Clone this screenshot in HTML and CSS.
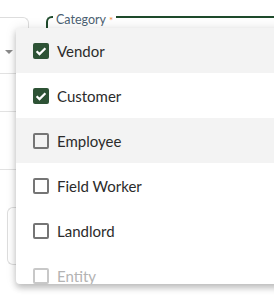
FILE: index.html
```html
<!DOCTYPE html>
<html lang="en">
<head>
    <meta charset="UTF-8">
    <meta name="viewport" content="width=device-width, initial-scale=1.0">
    <title>Category picker</title>
    <link rel="stylesheet" href="styles.css">
</head>
<body>
    <div class="page">
        <div class="form-row">
            <div class="side-panel">
                <div class="select-cell">
                    <span class="caret"></span>
                </div>
                <div class="table-row row-a"></div>
                <div class="table-row row-b"></div>
                <div class="side-card"></div>
            </div>
            <fieldset class="category-field">
                <legend>Category <span class="req">*</span></legend>
            </fieldset>
        </div>

        <ul class="menu">
            <li class="menu-item shaded">
                <span class="check checked"><svg viewBox="0 0 16 16"><path d="M3.6 8.2l2.9 2.9 5.9-5.9" /></svg></span>
                Vendor
            </li>
            <li class="menu-item">
                <span class="check checked"><svg viewBox="0 0 16 16"><path d="M3.6 8.2l2.9 2.9 5.9-5.9" /></svg></span>
                Customer
            </li>
            <li class="menu-item shaded">
                <span class="check"></span>
                Employee
            </li>
            <li class="menu-item">
                <span class="check"></span>
                Field Worker
            </li>
            <li class="menu-item">
                <span class="check"></span>
                Landlord
            </li>
            <li class="menu-item disabled">
                <span class="check"></span>
                Entity
            </li>
        </ul>
    </div>
</body>
</html>
```

FILE: styles.css
```css
body {
    margin: 0;
    font-family: Lato, "Open Sans", sans-serif;
    background-color: #fff;
    color: #2b2b2b;
}
.page {
    position: relative;
    height: 297px;
    overflow: hidden;
}
.form-row {
    display: flex;
    align-items: flex-start;
    padding-top: 17px;
}
.side-panel {
    width: 29px;
    flex: none;
}
.select-cell {
    height: 57px;
    border: 1px solid #ddd;
    border-left: none;
    border-bottom-color: #e2e2e2;
    border-radius: 0 6px 0 0;
    box-sizing: border-box;
    padding: 32px 0 0 5px;
}
.caret {
    display: block;
    width: 0;
    height: 0;
    border-left: 4px solid transparent;
    border-right: 4px solid transparent;
    border-top: 4px solid #8a8a8a;
}
.table-row {
    border-bottom: 1px solid #e2e2e2;
}
.row-a {
    height: 37px;
}
.row-b {
    height: 57px;
}
.side-card {
    margin: 37px 0 0 7px;
    height: 58px;
    border: 1px solid #ddd;
    border-right: none;
    border-radius: 6px 0 0 6px;
    box-sizing: border-box;
}
.category-field {
    flex: 1;
    margin: 0 0 0 17px;
    height: 60px;
    padding: 0 0 0 5px;
    border: 2px solid #1e4a2b;
    border-right: none;
    border-radius: 6px 0 0 0;
    position: relative;
    top: -10px;
}
.category-field legend {
    padding: 6px 3px 0;
    font-size: 12.5px;
    line-height: 14px;
    color: #4b6172;
}
.req {
    color: #f0873a;
    font-size: 10px;
    vertical-align: top;
}
.menu {
    position: absolute;
    left: 16px;
    top: 28px;
    width: 290px;
    height: 256px;
    margin: 0;
    padding: 0;
    list-style: none;
    background-color: #fff;
    overflow: hidden;
    box-shadow: 0 4px 6px rgba(0, 0, 0, 0.22), 0 0 12px rgba(0, 0, 0, 0.1);
    border-radius: 0 0 4px 4px;
}
.menu-item {
    display: flex;
    align-items: center;
    gap: 8px;
    height: 45px;
    padding-left: 17px;
    font-size: 15px;
}
.menu-item.shaded {
    background-color: #f3f3f3;
}
.check {
    width: 16px;
    height: 16px;
    box-sizing: border-box;
    border: 2px solid #757575;
    border-radius: 2px;
    flex: none;
}
.check.checked {
    border: none;
    background-color: #2d5235;
}
.check svg {
    display: block;
    width: 16px;
    height: 16px;
    fill: none;
    stroke: #fff;
    stroke-width: 2.2;
}
.menu-item.disabled {
    color: #b3b3b3;
}
.menu-item.disabled .check {
    border-color: #c8c8c8;
}
```
